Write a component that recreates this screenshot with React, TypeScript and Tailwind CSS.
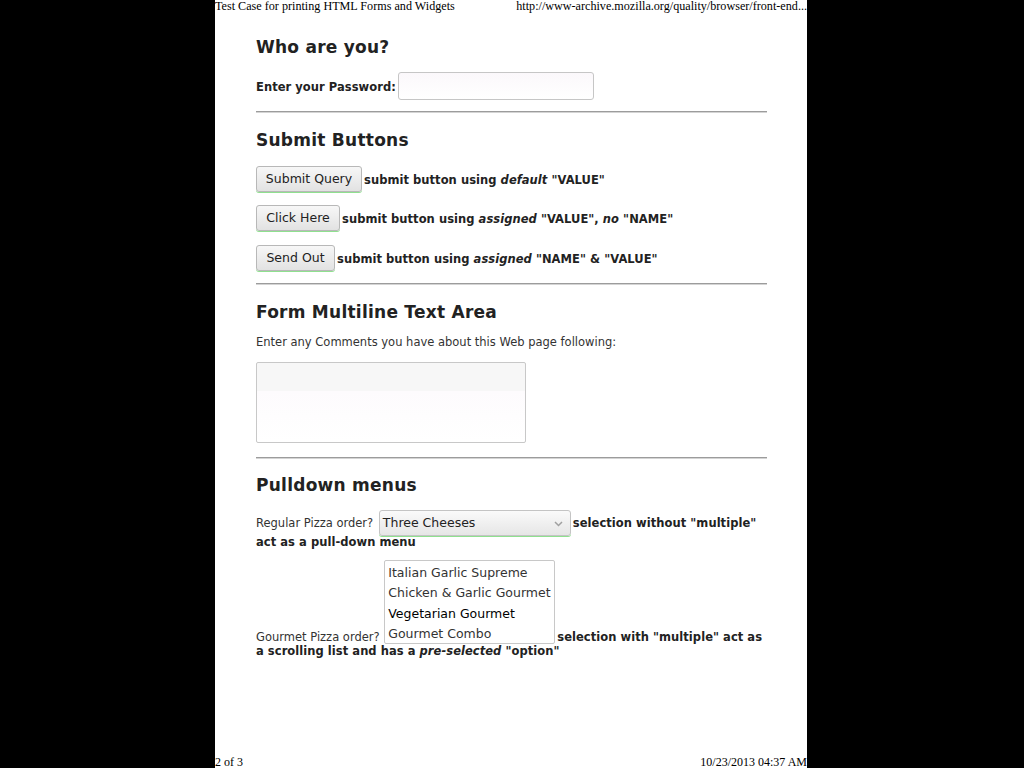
import React from "react";

function Hr({ mt }: { mt: string }) {
  return <div className={`${mt} h-[2px] border-t border-t-[#9c9c9c] border-b border-b-[#d4d4d4]`} />;
}

function Btn({ label, w }: { label: string; w: string }) {
  return (
    <div
      className={`${w} h-[26px] shrink-0 flex items-center justify-center rounded-[3px] border border-[#b8b8b8] bg-[linear-gradient(#f7f7f7,#e2e2e2)] text-[12.5px] text-[#222] shadow-[0_1px_0_#8fe08f]`}
    >
      {label}
    </div>
  );
}

export default function App() {
  return (
    <div className="w-[1024px] h-[768px] bg-black overflow-hidden">
      <div className="ml-[215px] w-[592px] h-[768px] bg-white flex flex-col font-['DejaVu_Sans',sans-serif] text-[#222]">
        <div className="h-[12px] flex justify-between font-['Liberation_Serif',serif] text-[12.15px] leading-[12px] text-black whitespace-nowrap">
          <span>Test Case for printing HTML Forms and Widgets</span>
          <span>http://www-archive.mozilla.org/quality/browser/front-end...</span>
        </div>

        <div className="pl-[41px] pr-[40px] flex flex-col">
          <h2 className="mt-[25px] text-[17px] tracking-[0.25px] leading-[20px] font-bold">Who are you?</h2>
          <div className="mt-[15px] h-[28px] flex items-center">
            <span className="mt-[3px] text-[11.5px] tracking-[0.05px] font-bold">Enter your Password:</span>
            <div className="ml-[2px] w-[196px] h-[28px] rounded-[3px] border border-[#c6c6c6] bg-[linear-gradient(#fbf8fb,#ffffff)]" />
          </div>

          <Hr mt="mt-[11px]" />

          <h2 className="mt-[17px] text-[17px] tracking-[0.25px] leading-[20px] font-bold">Submit Buttons</h2>
          <div className="mt-[16px] flex items-center">
            <Btn label="Submit Query" w="w-[106px]" />
            <span className="ml-[2px] mt-[3px] text-[11.5px] tracking-[0.05px] font-bold">
              submit button using <i>default</i> "VALUE"
            </span>
          </div>
          <div className="mt-[13px] flex items-center">
            <Btn label="Click Here" w="w-[84px]" />
            <span className="ml-[2px] mt-[3px] text-[11.5px] tracking-[0.05px] font-bold">
              submit button using <i>assigned</i> "VALUE", <i>no</i> "NAME"
            </span>
          </div>
          <div className="mt-[14px] flex items-center">
            <Btn label="Send Out" w="w-[79px]" />
            <span className="ml-[2px] mt-[3px] text-[11.5px] tracking-[0.05px] font-bold">
              submit button using <i>assigned</i> "NAME" &amp; "VALUE"
            </span>
          </div>

          <Hr mt="mt-[12px]" />

          <h2 className="mt-[17px] text-[17px] tracking-[0.25px] leading-[20px] font-bold">Form Multiline Text Area</h2>
          <p className="mt-[12px] text-[11.5px] leading-[16px] text-[#333]">
            Enter any Comments you have about this Web page following:
          </p>
          <div className="mt-[12px] w-[270px] h-[81px] rounded-[2px] border border-[#c8c8c8] bg-[linear-gradient(#f7f7f7_0,#f7f7f7_36%,#fdfbfd_36%,#ffffff_100%)]" />

          <Hr mt="mt-[14px]" />

          <h2 className="mt-[16px] text-[17px] tracking-[0.25px] leading-[20px] font-bold">Pulldown menus</h2>
          <p className="mt-[17px] text-[11.5px] leading-[16px]">
            <span className="text-[#333]">Regular Pizza order?</span>{" "}
            <span className="ml-[2px] inline-flex align-middle my-[-2px] w-[192px] h-[26px] items-center justify-between pl-[3px] pr-[7px] rounded-[3px] border border-[#c4c4c4] bg-[linear-gradient(#fafafa,#e6e6e6)] shadow-[0_1px_0_#8fe08f] text-[12.5px] text-[#222]">
              <span>Three Cheeses</span>
              <svg width="9" height="6" viewBox="0 0 9 6" className="mt-[1px]">
                <polyline points="1,1 4.5,4.5 8,1" fill="none" stroke="#a0a0a0" strokeWidth="1.5" />
              </svg>
            </span>
            <b className="ml-[2px] tracking-[0.05px]">selection without "multiple" act as a pull-down menu</b>
          </p>

          <p className="mt-[10px] text-[11.5px] leading-[14px]">
            <span className="text-[#333]">Gourmet Pizza order?</span>{" "}
            <span className="ml-[1px] inline-block overflow-hidden align-[-3px] w-[171px] h-[84px] rounded-[2px] border border-[#c8c8c8] bg-white pl-[3px] pt-[2px] text-[12.5px] leading-[20.3px] text-[#333]">
              <span className="block">Italian Garlic Supreme</span>
              <span className="block">Chicken &amp; Garlic Gourmet</span>
              <span className="block text-black">Vegetarian Gourmet</span>
              <span className="block">Gourmet Combo</span>
            </span>
            <b className="ml-[2px] tracking-[0.05px]">
              selection with "multiple" act as a scrolling list and has a <i>pre-selected</i> "option"
            </b>
          </p>
        </div>

        <div className="mt-auto h-[12px] flex justify-between font-['Liberation_Serif',serif] text-[12px] leading-[12px] text-black whitespace-nowrap">
          <span>2 of 3</span>
          <span>10/23/2013 04:37 AM</span>
        </div>
      </div>
    </div>
  );
}
